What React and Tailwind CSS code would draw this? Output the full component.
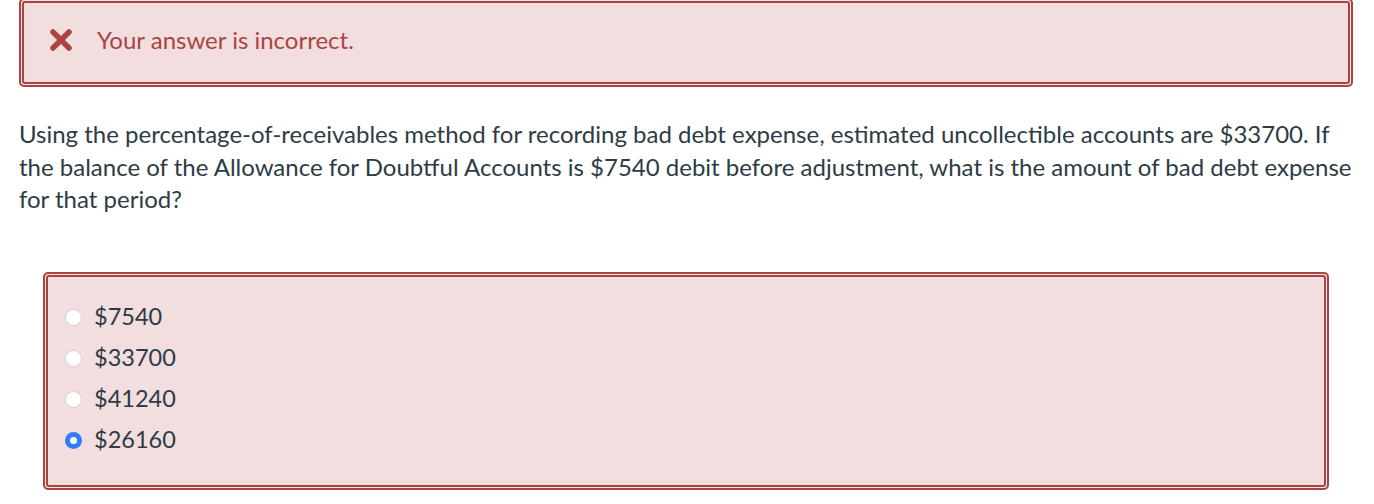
import React from "react";

const options = [
  { label: "$7540", checked: false },
  { label: "$33700", checked: false },
  { label: "$41240", checked: false },
  { label: "$26160", checked: true },
];

function Radio({ checked }) {
  if (checked) {
    return (
      <span className="flex h-[17px] w-[17px] items-center justify-center rounded-full bg-[#2f7df6]">
        <span className="h-[7px] w-[7px] rounded-full bg-white" />
      </span>
    );
  }
  return (
    <span className="h-[17px] w-[17px] rounded-full border border-[#cfcfcf] bg-white" />
  );
}

function ErrorBox({ className, children }) {
  return (
    <div className={"rounded-[5px] border-2 border-[#a94442] bg-[#f7e4e4] p-px " + className}>
      <div className="rounded-[3px] border-2 border-[#a94442] bg-[#f2dede]">{children}</div>
    </div>
  );
}

export default function App() {
  return (
    <div
      className="h-[504px] w-[1374px] overflow-hidden bg-white pl-[19px] pr-[21px] text-[#2d3b45]"
      style={{ fontFamily: "Lato, 'Noto Sans', sans-serif" }}
    >
      <ErrorBox className="-mt-[2px]">
        <div className="flex h-[79px] items-center pb-[5px] pl-[25px] text-[#a94442]">
          <svg width="24" height="24" viewBox="0 0 24 24">
            <path
              d="M4 4 L20 20 M20 4 L4 20"
              stroke="#a94442"
              strokeWidth="5.5"
              strokeLinecap="round"
            />
          </svg>
          <span className="ml-[24px] text-[24px]">Your answer is incorrect.</span>
        </div>
      </ErrorBox>

      <p className="mt-[31px] text-[24px] leading-[32.5px]">
        Using the percentage-of-receivables method for recording bad debt expense, estimated uncollectible accounts are $33700. If the balance of the Allowance for Doubtful Accounts is $7540 debit before adjustment, what is the amount of bad debt expense for that period?
      </p>

      <ErrorBox className="mx-[24px] mt-[56px]">
        <div className="flex flex-col pb-[24px] pl-[17px] pt-[20px]">
          {options.map((o) => (
            <label key={o.label} className="flex h-[41px] items-center">
              <Radio checked={o.checked} />
              <span className="ml-[12px] text-[23.5px]">{o.label}</span>
            </label>
          ))}
        </div>
      </ErrorBox>
    </div>
  );
}
